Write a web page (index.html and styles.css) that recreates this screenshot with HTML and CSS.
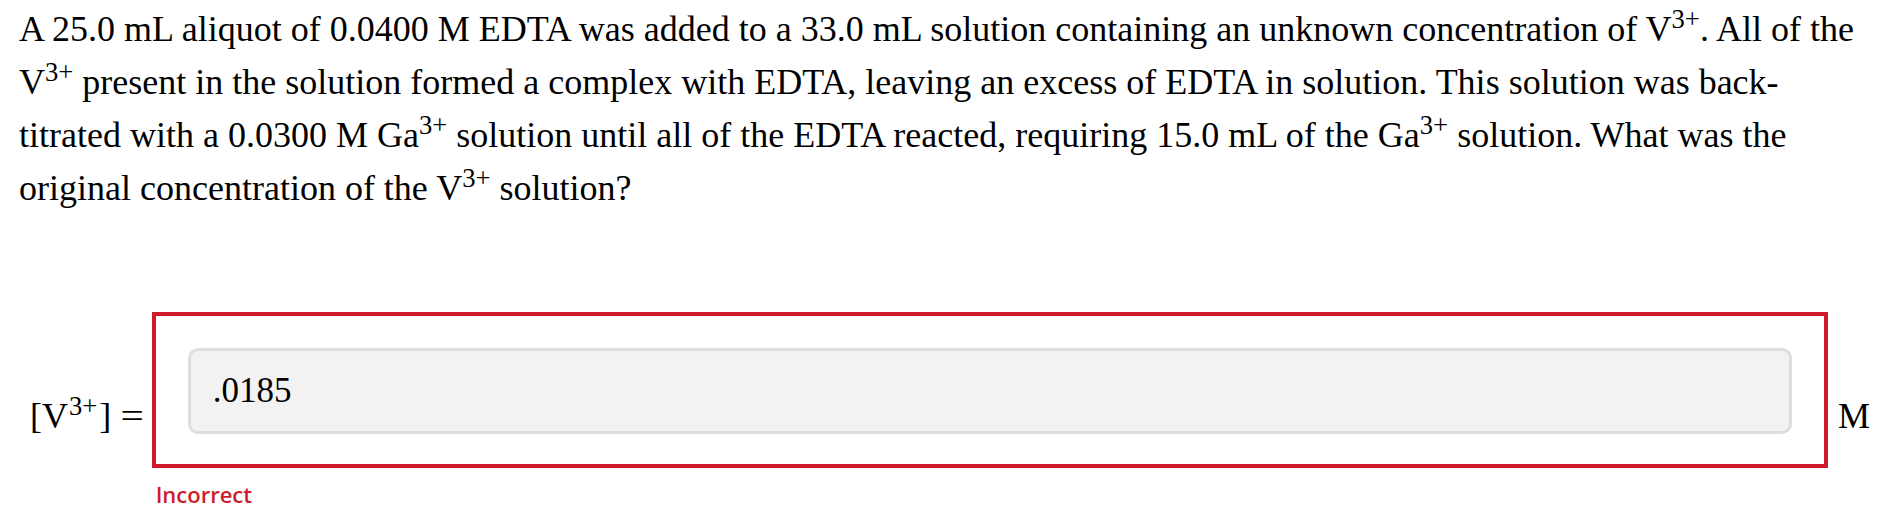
FILE: index.html
```html
<!DOCTYPE html>
<html>
<head>
<meta charset="utf-8">
<link rel="stylesheet" href="styles.css">
</head>
<body>
<div class="page">
  <p class="question">A 25.0 mL aliquot of 0.0400 M EDTA was added to a 33.0 mL solution containing an unknown concentration of V<sup>3+</sup>. All of the V<sup>3+</sup> present in the solution formed a complex with EDTA, leaving an excess of EDTA in solution. This solution was back-titrated with a 0.0300 M Ga<sup>3+</sup> solution until all of the EDTA reacted, requiring 15.0 mL of the Ga<sup>3+</sup> solution. What was the original concentration of the V<sup>3+</sup> solution?</p>
  <div class="answer-row">
    <div class="label">[V<sup class="lsup">3+</sup>] <span class="eq">=</span></div>
    <div class="field">
      <div class="field-box">
        <div class="input">.0185</div>
      </div>
      <div class="feedback">Incorrect</div>
    </div>
    <div class="unit">M</div>
  </div>
</div>
</body>
</html>
```

FILE: styles.css
```css
html, body {
  margin: 0;
  padding: 0;
  background: #ffffff;
}

.page {
  padding: 3px 8px 0 19px;
  font-family: "Liberation Serif", "Times New Roman", serif;
  color: #000000;
}

.question {
  margin: 0;
  font-size: 36px;
  line-height: 53px;
}

sup {
  font-size: 0.74em;
  line-height: 0;
  vertical-align: 0.5em;
}

.lsup {
  margin-left: 1px;
  margin-right: 2px;
}

.answer-row {
  display: flex;
  align-items: center;
  margin-top: 97px;
  margin-left: 11px;
}

.label, .unit {
  font-size: 36px;
  line-height: 34px;
  padding-top: 12px;
  white-space: nowrap;
  flex: none;
}

.label {
  margin-right: 9px;
}

.eq {
  display: inline-block;
  margin-left: 2px;
  transform: scaleX(1.15);
}

.unit {
  margin-left: 10px;
}

.field {
  flex: 1;
  display: flex;
  flex-direction: column;
}

.field-box {
  border: 4px solid #cf1b2b;
  padding: 32px 32px 30px 32px;
}

.input {
  box-sizing: border-box;
  height: 86px;
  border: 3px solid #dedede;
  border-radius: 10px;
  background: #f2f2f2;
  padding: 0 22px;
  display: flex;
  align-items: center;
  font-size: 35px;
}

.feedback {
  margin-top: 12px;
  margin-left: 4px;
  font-family: "Open Sans", "Liberation Sans", sans-serif;
  font-weight: 600;
  font-size: 22px;
  color: #cf1b2b;
  line-height: 28px;
}
```
